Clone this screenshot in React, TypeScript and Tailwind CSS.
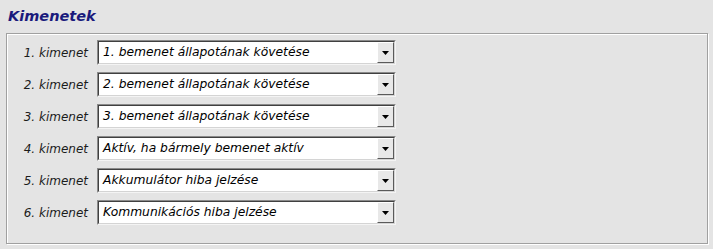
const rows = [
  { label: "1. kimenet", value: "1. bemenet állapotának követése" },
  { label: "2. kimenet", value: "2. bemenet állapotának követése" },
  { label: "3. kimenet", value: "3. bemenet állapotának követése" },
  { label: "4. kimenet", value: "Aktív, ha bármely bemenet aktív" },
  { label: "5. kimenet", value: "Akkumulátor hiba jelzése" },
  { label: "6. kimenet", value: "Kommunikációs hiba jelzése" },
];

function Select({ value }: { value: string }) {
  return (
    <div className="flex h-[25px] w-[299px] border border-t-[#8a8a8a] border-l-[#8a8a8a] border-b-[#f4f4f4] border-r-[#f4f4f4] bg-white">
      <div className="flex flex-1 border border-t-[#404040] border-l-[#404040] border-b-[#d4d4d4] border-r-[#d4d4d4]">
        <span className="flex-1 pl-[4px] pt-[2px] text-[12.3px] italic leading-[17px] text-black">
          {value}
        </span>
        <div className="flex w-[17px] items-center justify-center border border-t-white border-l-white border-b-[#5a5a5a] border-r-[#5a5a5a] bg-[#e8e8e8]">
          <svg width="7" height="4" viewBox="0 0 7 4">
            <path d="M0 0h7L3.5 4z" fill="#000" />
          </svg>
        </div>
      </div>
    </div>
  );
}

export default function App() {
  return (
    <div className="h-[249px] w-[713px] bg-[#e4e4e4] pt-[7px] [font-family:'DejaVu_Sans',sans-serif]">
      <h1 className="ml-[8px] text-[14.5px] font-bold italic leading-[18px] text-[#1a1a7c]">Kimenetek</h1>
      {/* etched frame */}
      <div className="ml-[6px] mt-[8px] h-[211px] w-[702px] border border-[#a0a0a0] pt-[6px] shadow-[inset_1px_1px_0_#fff,1px_1px_0_#fff]">
        <div className="flex flex-col gap-[7px]">
          {rows.map((r) => (
            <div key={r.label} className="flex items-center">
              <span className="w-[81px] text-right text-[12px] italic text-[#1c1c1c]">{r.label}</span>
              <div className="ml-[9px]">
                <Select value={r.value} />
              </div>
            </div>
          ))}
        </div>
      </div>
    </div>
  );
}
